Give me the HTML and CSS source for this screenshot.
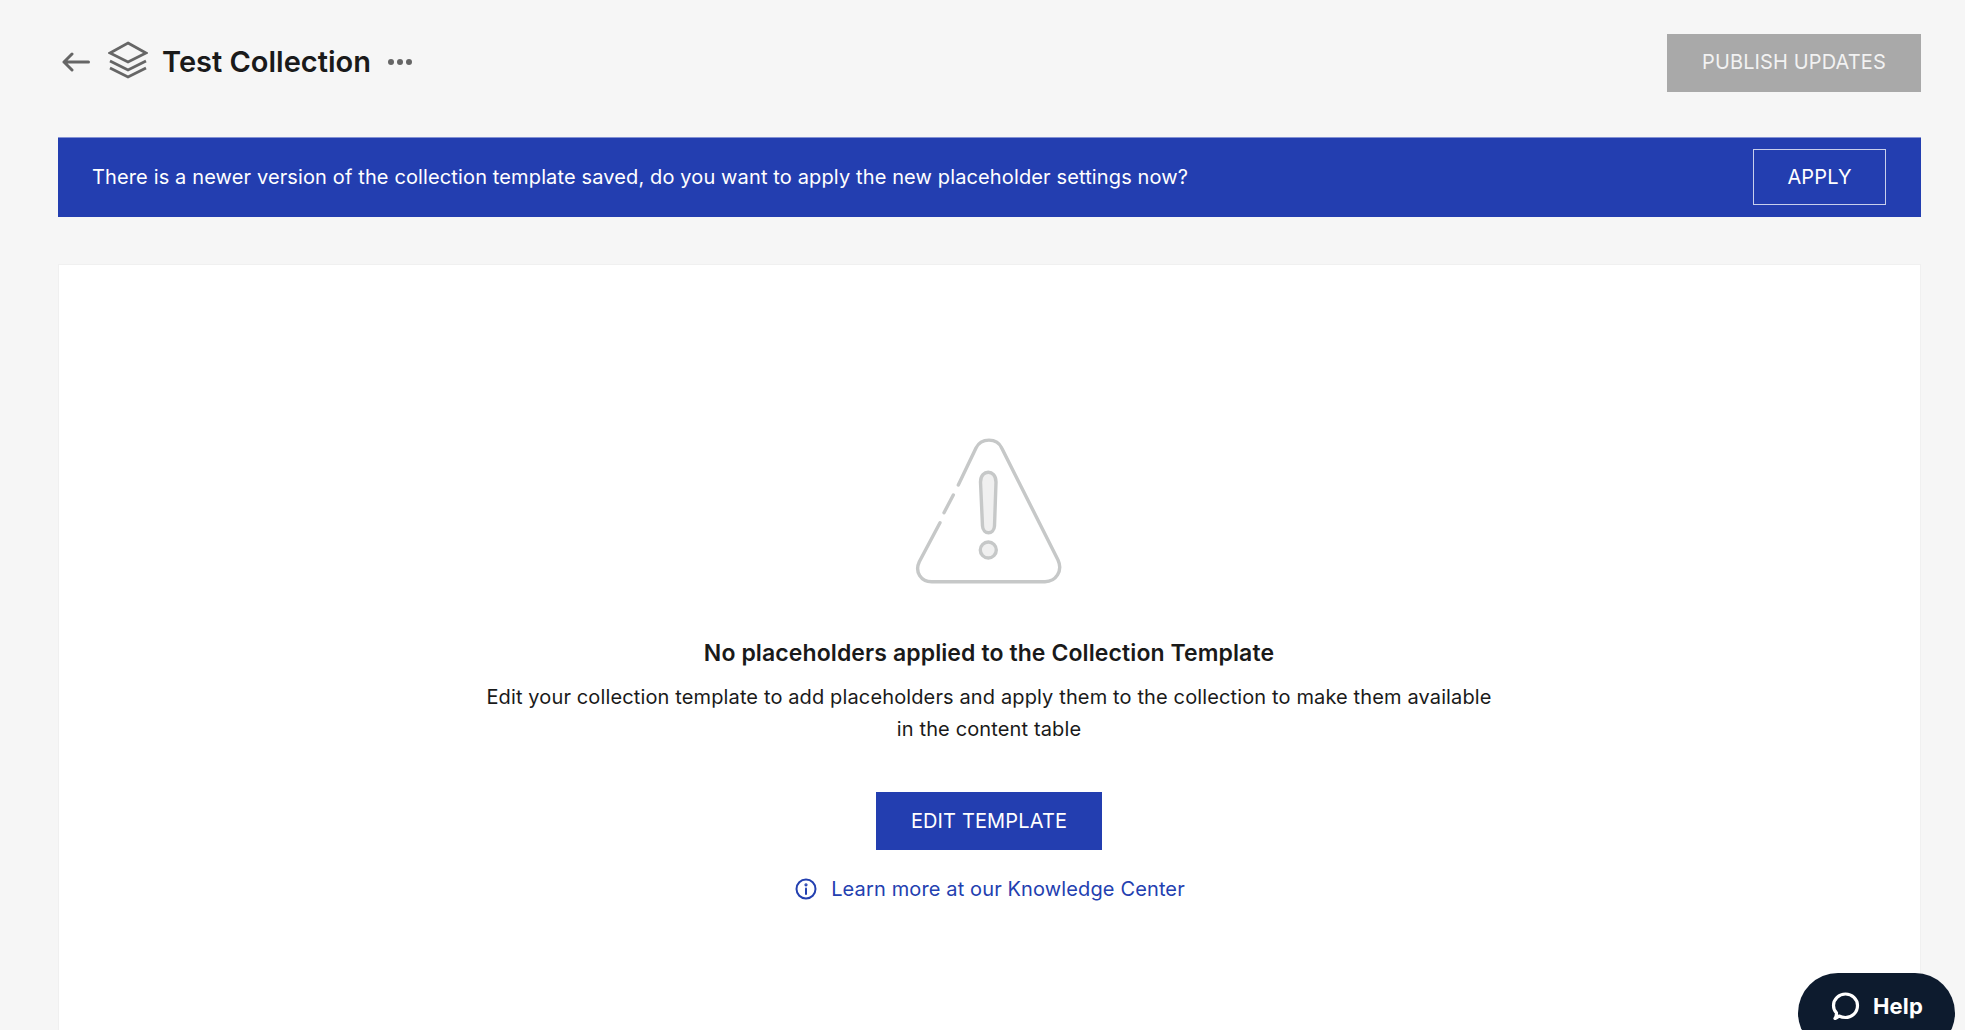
FILE: index.html
```html
<!DOCTYPE html>
<html lang="en">
<head>
    <meta charset="UTF-8">
    <title>Test Collection</title>
    <link rel="stylesheet" href="styles.css">
</head>
<body>

<div class="page">
    <header class="top-bar">
        <div class="title-group">
            <svg class="back-icon" width="28" height="20" viewBox="0 0 28 20" fill="none" stroke="#666" stroke-width="3" stroke-linecap="round" stroke-linejoin="round">
                <path d="M26.5 10H2M10 2L2 10L10 18"/>
            </svg>
            <svg class="layers-icon" width="40" height="38" viewBox="0 0 40 38" fill="none" stroke="#666" stroke-width="2.8" stroke-linejoin="miter">
                <path d="M20 2L38 12L20 21L2 12Z"/>
                <path d="M2 20L20 29L38 20"/>
                <path d="M2 27L20 36L38 27"/>
            </svg>
            <h1>Test Collection</h1>
            <svg class="more-icon" width="24" height="6" viewBox="0 0 24 6" fill="#666">
                <circle cx="3" cy="3" r="3"/>
                <circle cx="12" cy="3" r="3"/>
                <circle cx="21" cy="3" r="3"/>
            </svg>
        </div>
        <button class="btn btn-disabled">PUBLISH UPDATES</button>
    </header>

    <div class="banner">
        <span>There is a newer version of the collection template saved, do you want to apply the new placeholder settings now?</span>
        <button class="btn btn-outline">APPLY</button>
    </div>

    <main class="card">
        <svg class="warning-icon" width="150" height="150" viewBox="0 0 150 150" fill="none" stroke="#c6c8c8" stroke-width="3.4" stroke-linecap="round">
            <path d="M44.3 49L62 12C67 1.5 83 1.5 87.7 12L144 124C149 135 142 145.7 131 145.7H17.7C7 145.7 0.5 136 5.3 125.7L26 86.7"/>
            <path d="M30 76.7L39.3 59"/>
            <path d="M66.5 46C66.5 33 82 33 82 46L80.5 90C80 99 69 99 68.5 90Z" fill="#f0f0f0"/>
            <circle cx="74.3" cy="114" r="8" fill="#f0f0f0"/>
        </svg>
        <h2>No placeholders applied to the Collection Template</h2>
        <p>Edit your collection template to add placeholders and apply them to the collection to make them available<br>in the content table</p>
        <button class="btn btn-primary">EDIT TEMPLATE</button>
        <a class="learn-link" href="#">
            <svg width="22" height="22" viewBox="0 0 22 22" fill="none" stroke="#2340b0" stroke-width="2" stroke-linecap="round">
                <circle cx="11" cy="11" r="9.5"/>
                <path d="M11 10.5V16"/>
                <circle cx="11" cy="6.8" r="0.6"/>
            </svg>
            Learn more at our Knowledge Center
        </a>
    </main>
</div>

<button class="help-button">
    <svg width="30" height="30" viewBox="0 0 30 30" fill="none" stroke="#fff" stroke-width="3.2" stroke-linejoin="round">
        <path d="M5 27.5C7 26.5 8 25.8 9 25C11 26 13 26.5 15.5 26.5C22 26.5 27.5 21.5 27.5 14.5C27.5 8 22 3 15.5 3C9 3 3.5 8 3.5 14.5C3.5 17.5 4.5 20 6.5 22C6.5 24 6 26 5 27.5Z"/>
    </svg>
    Help
</button>

</body>
</html>
```

FILE: styles.css
```css
html, body {
    height: 100%;
}
body {
    margin: 0;
    background: #f6f6f6;
    font-family: 'Inter', sans-serif;
    color: #1a1a1a;
    letter-spacing: 0.13px;
    overflow: hidden;
}
.page {
    display: flex;
    flex-direction: column;
    height: 100%;
    padding: 34px 44px 0 58px;
    box-sizing: border-box;
}
.top-bar {
    display: flex;
    justify-content: space-between;
    align-items: center;
    height: 58px;
    margin-bottom: 45px;
}
.title-group {
    display: flex;
    align-items: center;
    padding-bottom: 2px;
}
.back-icon {
    margin-left: 4px;
}
.layers-icon {
    margin-left: 18px;
    margin-top: -4px;
}
h1 {
    margin: -1px 0 0 14px;
    font-size: 29px;
    font-weight: 600;
    letter-spacing: 0;
}
.more-icon {
    margin-left: 17px;
}
.btn {
    border: none;
    border-radius: 0;
    font-family: inherit;
    font-size: 20px;
    letter-spacing: inherit;
    color: #fff;
    cursor: pointer;
}
.btn-disabled {
    width: 254px;
    height: 58px;
    padding-bottom: 3px;
    background: #a9a9a9;
    color: #f2f2f2;
}
.banner {
    display: flex;
    justify-content: space-between;
    align-items: center;
    height: 80px;
    box-sizing: border-box;
    padding: 0 35px 1px;
    background: #233eb0;
    border-top: 1px solid #8492d4;
    color: #fff;
    font-size: 20px;
    margin-bottom: 47px;
}
.banner span {
    margin-left: -1px;
}
.btn-outline {
    width: 133px;
    height: 56px;
    background: transparent;
    border: 1px solid #c8cfec;
}
.card {
    flex: 1;
    display: flex;
    flex-direction: column;
    align-items: center;
    padding: 171px 1px 0 0;
    background: #fff;
    border: 1px solid #f0f0f0;
    border-bottom: none;
}
h2 {
    margin: 51px 0 0;
    font-size: 23px;
    font-weight: 600;
    line-height: 32px;
    letter-spacing: 0.1px;
}
.card p {
    margin: 12px 0 0;
    font-size: 20px;
    line-height: 32px;
    text-align: center;
}
.btn-primary {
    width: 226px;
    height: 58px;
    margin-top: 47px;
    background: #233eb0;
}
.learn-link {
    display: flex;
    align-items: center;
    gap: 14px;
    margin: 27px 0 0 2px;
    color: #2340b0;
    font-size: 20px;
    text-decoration: none;
}
.help-button {
    position: absolute;
    left: 1798px;
    top: 973px;
    width: 157px;
    height: 80px;
    display: flex;
    align-items: flex-start;
    justify-content: center;
    gap: 13px;
    padding-top: 18px;
    border: none;
    border-radius: 40px;
    background: #0d1b2e;
    color: #fff;
    font-family: 'Inter', sans-serif;
    font-size: 22px;
    font-weight: 700;
    letter-spacing: 0.2px;
    line-height: 30px;
}
```
